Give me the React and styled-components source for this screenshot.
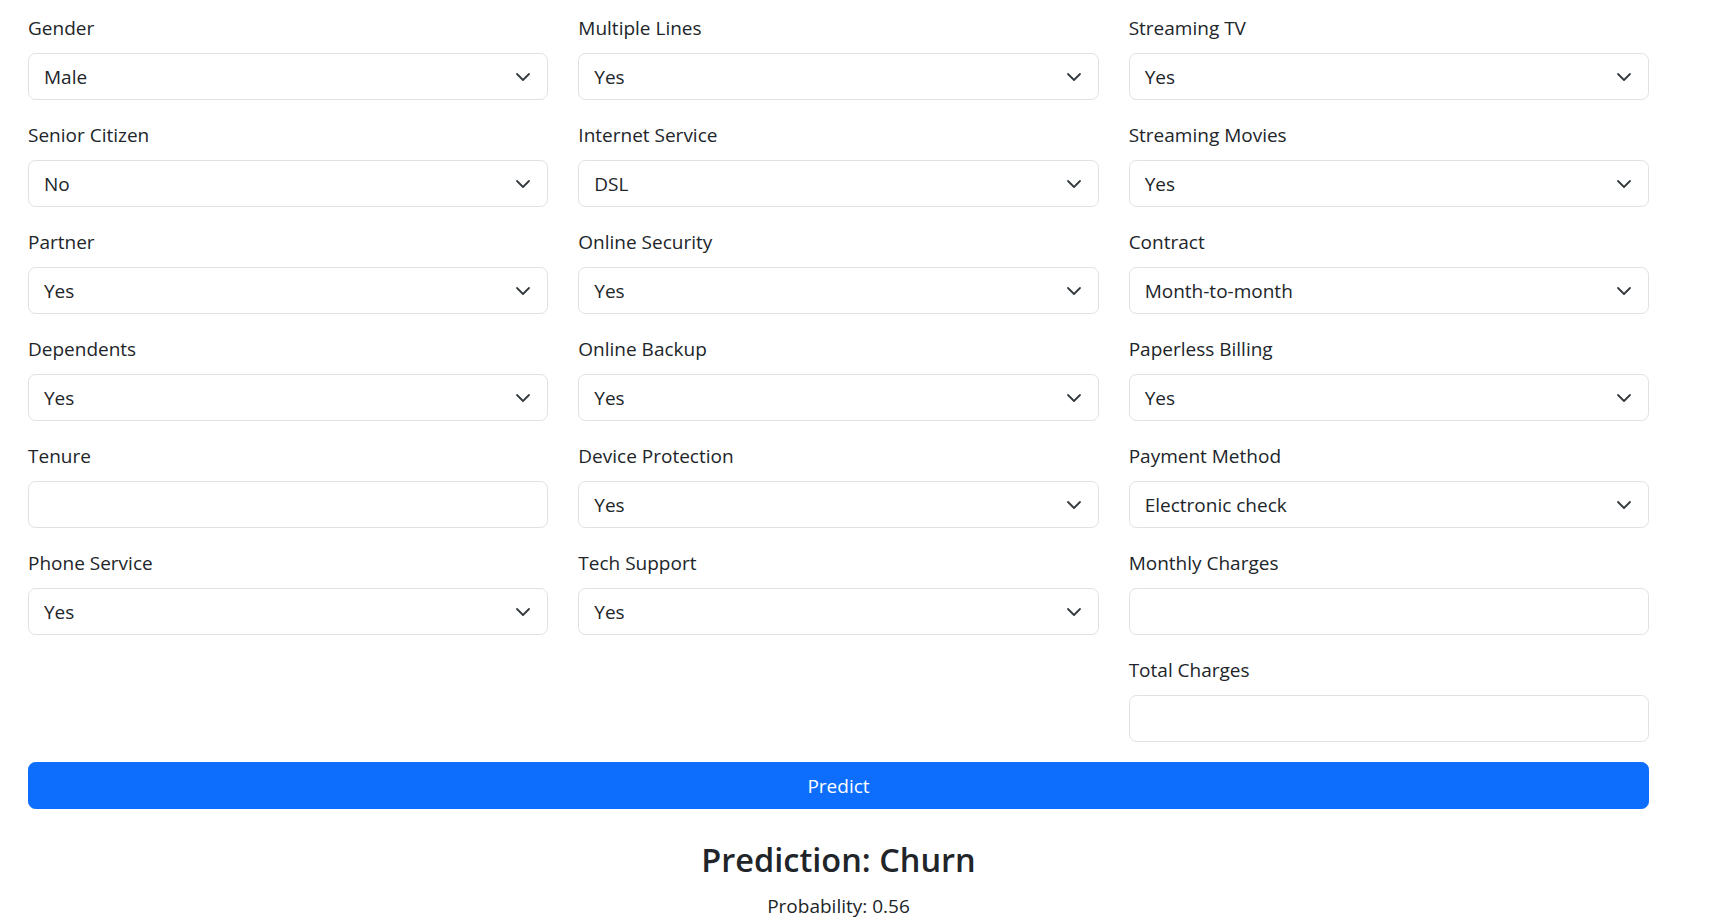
import React, { useState } from 'react'
import styled, { createGlobalStyle } from 'styled-components'

const GlobalStyle = createGlobalStyle`
  * {
    box-sizing: border-box;
  }

  body {
    margin: 0;
    background: #ffffff;
    color: #212529;
    font-family: "Segoe UI", "Open Sans", "Noto Sans", sans-serif;
    font-size: 19px;
    line-height: 1.5;
  }
`;

const columns = [
  [
    { label: "Gender", options: ["Male", "Female"] },
    { label: "Senior Citizen", options: ["No", "Yes"] },
    { label: "Partner", options: ["Yes", "No"] },
    { label: "Dependents", options: ["Yes", "No"] },
    { label: "Tenure" },
    { label: "Phone Service", options: ["Yes", "No"] },
  ],
  [
    { label: "Multiple Lines", options: ["Yes", "No", "No phone service"] },
    { label: "Internet Service", options: ["DSL", "Fiber optic", "No"] },
    { label: "Online Security", options: ["Yes", "No"] },
    { label: "Online Backup", options: ["Yes", "No"] },
    { label: "Device Protection", options: ["Yes", "No"] },
    { label: "Tech Support", options: ["Yes", "No"] },
  ],
  [
    { label: "Streaming TV", options: ["Yes", "No"] },
    { label: "Streaming Movies", options: ["Yes", "No"] },
    { label: "Contract", options: ["Month-to-month", "One year", "Two year"] },
    { label: "Paperless Billing", options: ["Yes", "No"] },
    { label: "Payment Method", options: ["Electronic check", "Mailed check", "Bank transfer (automatic)", "Credit card (automatic)"] },
    { label: "Monthly Charges" },
    { label: "Total Charges" },
  ],
];

const Chevron = () => (
  <ChevronIcon viewBox="0 0 16 16" fill="none">
    <path d="m2 5 6 6 6-6" stroke="#343a40" strokeWidth="1.8" strokeLinecap="round" strokeLinejoin="round" />
  </ChevronIcon>
);

const Field = ({ label, options }) => (
  <FieldGroup>
    <Label>{label}</Label>
    {options ? (
      <SelectWrap>
        <Select defaultValue={options[0]}>
          {options.map((o) => (
            <option key={o}>{o}</option>
          ))}
        </Select>
        <Chevron />
      </SelectWrap>
    ) : (
      <Input type="text" />
    )}
  </FieldGroup>
);

const App = () => {
  const [result] = useState({ label: "Churn", probability: "0.56" });

  return (
    <Page>
      <GlobalStyle />
      <FormGrid>
        {columns.map((col, i) => (
          <Column key={i}>
            {col.map((f) => (
              <Field key={f.label} {...f} />
            ))}
          </Column>
        ))}
      </FormGrid>

      <PredictButton type="button">Predict</PredictButton>

      <Result>
        <ResultTitle>Prediction: {result.label}</ResultTitle>
        <ResultText>Probability: {result.probability}</ResultText>
      </Result>
    </Page>
  )
};

const Page = styled.div`
  width: 1649px;
  padding: 13px 0 0 28px;
`;

const FormGrid = styled.div`
  display: grid;
  grid-template-columns: repeat(3, 1fr);
  column-gap: 30px;
`;

const Column = styled.div`
  display: flex;
  flex-direction: column;
`;

const FieldGroup = styled.div`
  display: flex;
  flex-direction: column;
  margin-bottom: 20px;
`;

const Label = styled.label`
  font-size: 19px;
  line-height: 30px;
  margin-bottom: 10px;
  color: #212529;
`;

const SelectWrap = styled.div`
  position: relative;
`;

const controlBase = `
  display: block;
  width: 100%;
  height: 47px;
  padding: 7px 15px;
  font-family: inherit;
  font-size: 19px;
  line-height: 30px;
  color: #212529;
  background-color: #ffffff;
  border: 1.25px solid #dee2e6;
  border-radius: 7.5px;
  outline: none;
`;

const Select = styled.select`
  ${controlBase}
  appearance: none;
  -webkit-appearance: none;
  padding-right: 50px;
`;

const Input = styled.input`
  ${controlBase}
`;

const ChevronIcon = styled.svg`
  position: absolute;
  right: 17px;
  top: 50%;
  width: 16px;
  height: 16px;
  transform: translateY(-50%);
  pointer-events: none;
`;

const PredictButton = styled.button`
  display: block;
  width: 100%;
  height: 47px;
  padding: 7px 15px;
  font-family: inherit;
  font-size: 19px;
  line-height: 30px;
  color: #ffffff;
  background-color: #0d6efd;
  border: 1.25px solid #0d6efd;
  border-radius: 7.5px;
  cursor: pointer;

  &:hover {
    background-color: #0b5ed7;
  }
`;

const Result = styled.div`
  margin-top: 30px;
  text-align: center;
`;

const ResultTitle = styled.h3`
  margin: 0 0 10px;
  font-size: 32.5px;
  font-weight: 600;
  line-height: 42px;
  color: #212529;
`;

const ResultText = styled.p`
  margin: 0;
  font-size: 19px;
  line-height: 30px;
  color: #212529;
`;

export default App
